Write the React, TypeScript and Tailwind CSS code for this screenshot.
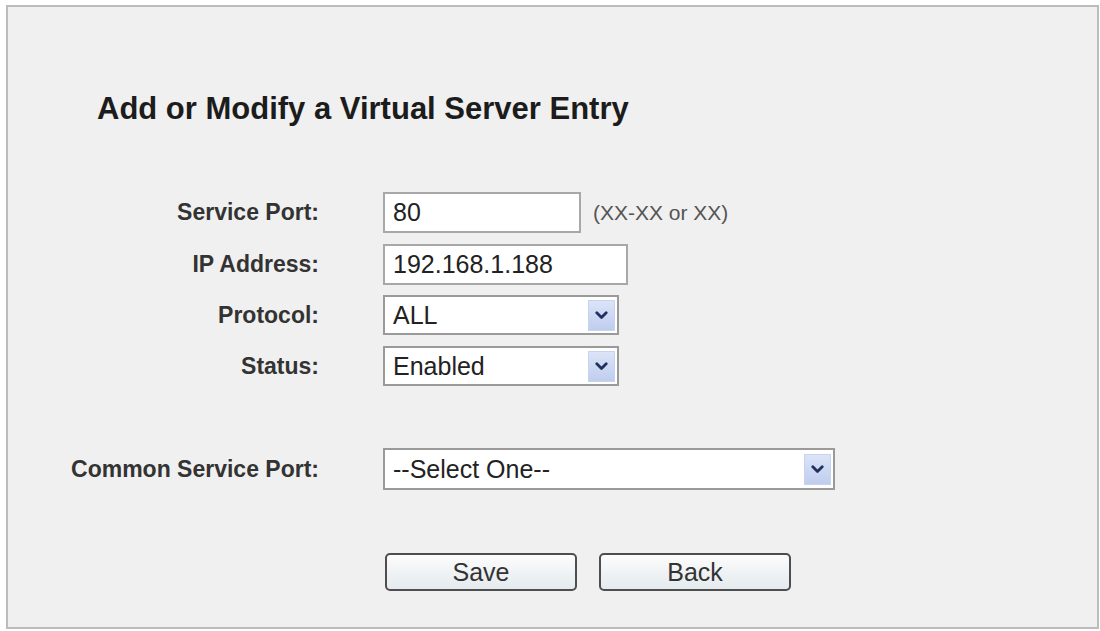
const Chevron = () => (
  <svg width="13" height="9" viewBox="0 0 13 9" fill="none">
    <path d="M1.8 1.8 L6.5 6.5 L11.2 1.8" stroke="#22305e" strokeWidth="2.8" strokeLinecap="round" strokeLinejoin="round" />
  </svg>
)

const SelectBox = ({ value, className }: { value: string; className: string }) => (
  <div className={`${className} flex items-center bg-white border-2 border-[#9a9a9a] pl-[8px] pr-[2px]`}>
    <span className="flex-1 text-[25px] text-[#222] leading-none">{value}</span>
    <div className="w-[27px] h-[31px] flex items-center justify-center bg-gradient-to-b from-[#dbe4f8] to-[#bfcdee] border border-[#c8d3ee]">
      <Chevron />
    </div>
  </div>
)

const Label = ({ text }: { text: string }) => (
  <div className="w-[311px] text-right font-bold text-[23px] text-[#333] leading-none shrink-0">{text}</div>
)

const Button = ({ text }: { text: string }) => (
  <button className="w-[192px] h-[38px] rounded-[5px] border-2 border-[#4e4e4e] bg-gradient-to-b from-[#fcfcfc] to-[#e4eaee] text-[25px] text-[#333] leading-none">
    {text}
  </button>
)

export default function App() {
  return (
    <div className="w-[1100px] h-[631px] bg-white pl-[6px] pt-[5px]" style={{ fontFamily: '"Liberation Sans", Arial, sans-serif' }}>
      <div className="w-[1093px] h-[624px] border-2 border-[#bcbcbc] bg-[#f0f0f0] flex flex-col">
        <h1 className="mt-[84px] pl-[89px] text-[31px] leading-[36px] font-bold text-[#1c1c1c]">
          Add or Modify a Virtual Server Entry
        </h1>

        <div className="mt-[65px] flex flex-col">
          <div className="flex items-center h-[41px] gap-[64px]">
            <Label text="Service Port:" />
            <div className="w-[198px] h-[41px] bg-white border-2 border-[#a8a8a8] flex items-center pl-[8px] text-[25px] text-[#222] leading-none">80</div>
            <span className="ml-[-52px] text-[21px] text-[#555]">(XX-XX or XX)</span>
          </div>
          <div className="flex items-center h-[41px] gap-[64px] mt-[11px]">
            <Label text="IP Address:" />
            <div className="w-[245px] h-[41px] bg-white border-2 border-[#a8a8a8] flex items-center pl-[8px] text-[25px] text-[#222] leading-none">192.168.1.188</div>
          </div>
          <div className="flex items-center h-[40px] gap-[64px] mt-[10px]">
            <Label text="Protocol:" />
            <SelectBox value="ALL" className="w-[236px] h-[40px]" />
          </div>
          <div className="flex items-center h-[40px] gap-[64px] mt-[11px]">
            <Label text="Status:" />
            <SelectBox value="Enabled" className="w-[236px] h-[40px]" />
          </div>
          <div className="flex items-center h-[42px] gap-[64px] mt-[62px]">
            <Label text="Common Service Port:" />
            <SelectBox value="--Select One--" className="w-[452px] h-[42px]" />
          </div>
          <div className="flex items-center mt-[63px] pl-[377px] gap-[22px]">
            <Button text="Save" />
            <Button text="Back" />
          </div>
        </div>
      </div>
    </div>
  )
}
